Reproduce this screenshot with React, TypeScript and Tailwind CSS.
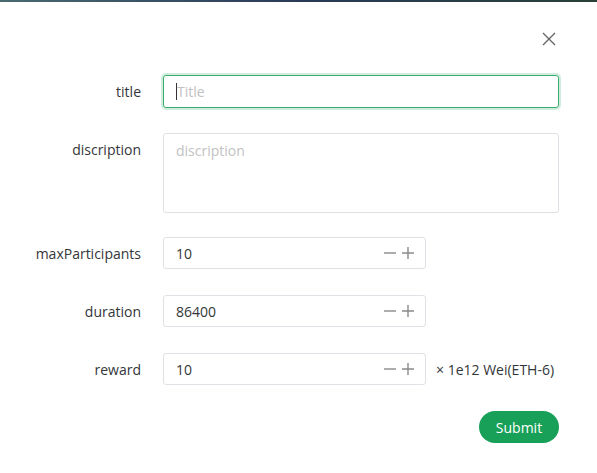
import React from "react";

const font = { fontFamily: '"Open Sans", "Noto Sans", sans-serif' };

function Minus() {
  return (
    <svg width="14" height="14" viewBox="0 0 14 14" className="text-[#8a8a8a]">
      <path d="M1 7h12" stroke="currentColor" strokeWidth="1.4" />
    </svg>
  );
}
function Plus() {
  return (
    <svg width="14" height="14" viewBox="0 0 14 14" className="text-[#8a8a8a]">
      <path d="M1 7h12M7 1v12" stroke="currentColor" strokeWidth="1.4" />
    </svg>
  );
}

function NumberRow({ label, value, suffix, mb }: { label: string; value: string; suffix?: string; mb: string }) {
  return (
    <div className={`flex items-center ${mb}`}>
      <div className="w-[141px] pr-0 text-right text-[14px] text-[#333639]">{label}</div>
      <div className="ml-[22px] flex h-[32px] w-[263px] items-center rounded-[3px] border border-[#e0e0e6] pl-[12px] pr-[10px]">
        <span className="flex-1 text-[14px] text-[#333639]">{value}</span>
        <div className="flex items-center gap-[4px]">
          <Minus />
          <Plus />
        </div>
      </div>
      {suffix && <span className="ml-[10px] text-[14px] text-[#333639]">{suffix}</span>}
    </div>
  );
}

export default function App() {
  return (
    <div className="relative h-[473px] w-[597px] overflow-hidden bg-white" style={font}>
      <div className="h-[2px] w-full bg-gradient-to-r from-[#4a6a70] via-[#2a3a58] to-[#2a4038]" />
      <div className="flex justify-end pr-[40px] pt-[29px]">
        <svg width="16" height="16" viewBox="0 0 16 16" className="text-[#666]">
          <path d="M2 2l12 12M14 2L2 14" stroke="currentColor" strokeWidth="1.4" />
        </svg>
      </div>
      <div className="pt-[28px]">
        <div className="mb-[25px] flex items-center">
          <div className="w-[141px] text-right text-[14px] text-[#333639]">title</div>
          <div className="ml-[22px] flex h-[33px] w-[396px] items-center rounded-[3px] border border-[#36ad6a] pl-[12px] shadow-[0_0_0_2px_rgba(24,160,88,0.2)]">
            <span className="h-[17px] w-[1px] bg-[#333]" />
            <span className="text-[14px] text-[#c2c2c2]">Title</span>
          </div>
        </div>
        <div className="mb-[24px] flex items-start">
          <div className="w-[141px] pt-[6px] text-right text-[14px] text-[#333639]">discription</div>
          <div className="ml-[22px] h-[80px] w-[396px] rounded-[3px] border border-[#e0e0e6] pl-[12px] pt-[4px]">
            <span className="text-[14px] text-[#c2c2c2]">discription</span>
          </div>
        </div>
        <NumberRow label="maxParticipants" value="10" mb="mb-[26px]" />
        <NumberRow label="duration" value="86400" mb="mb-[26px]" />
        <NumberRow label="reward" value="10" suffix="× 1e12 Wei(ETH-6)" mb="mb-[26px]" />
        <div className="flex justify-end pr-[38px]">
          <button className="h-[32px] w-[80px] rounded-full bg-[#18a058] text-[14px] text-white">Submit</button>
        </div>
      </div>
    </div>
  );
}
